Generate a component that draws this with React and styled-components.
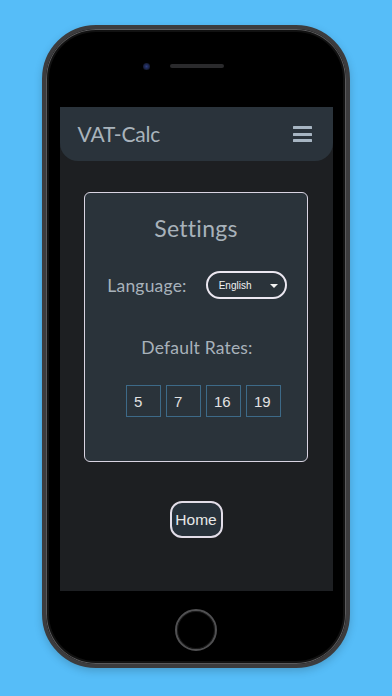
import React from "react";
import styled, { createGlobalStyle } from "styled-components";

const Global = createGlobalStyle`
  html, body { margin: 0; padding: 0; background: #56bdf8; }
  * { box-sizing: border-box; }
`;

const Page = styled.div`
  width: 392px;
  height: 696px;
  background: #56bdf8;
  display: flex;
  justify-content: center;
  padding-top: 25px;
  overflow: hidden;
`;

const Phone = styled.div`
  width: 308px;
  height: 643px;
  border-radius: 54px;
  background: #000;
  border: 4px solid #3c3c3e;
  box-shadow: inset 0 0 0 1px #5a5a5c, inset 0 0 0 3px #111, 0 3px 8px rgba(0,0,0,0.18);
  display: flex;
  flex-direction: column;
  align-items: center;
`;

const TopBezel = styled.div`
  height: 78px;
  width: 100%;
  display: flex;
  justify-content: center;
  align-items: center;
  gap: 20px;
  padding-right: 26px;
  padding-bottom: 4px;
`;

const Camera = styled.div`
  width: 7px;
  height: 7px;
  border-radius: 50%;
  background: radial-gradient(circle at 50% 50%, #2c3c80 0%, #141a30 70%);
`;

const Speaker = styled.div`
  width: 54px;
  height: 4px;
  border-radius: 2px;
  background: #2a2a2c;
`;

const Screen = styled.div`
  width: 273px;
  height: 484px;
  background: #1d1f22;
  display: flex;
  flex-direction: column;
  align-items: center;
`;

const Header = styled.div`
  width: 100%;
  height: 54px;
  background: #2a333b;
  border-radius: 0 0 18px 18px;
  display: flex;
  align-items: center;
  justify-content: space-between;
  padding: 0 21px 0 18px;
`;

const Title = styled.div`
  font-family: Lato, "Open Sans", sans-serif;
  font-size: 21px;
  color: #a9b3bc;
  letter-spacing: -0.2px;
  padding-bottom: 2px;
`;

const Burger = styled.div`
  width: 19px;
  display: flex;
  flex-direction: column;
  gap: 3.5px;
`;

const Bar = styled.div`
  height: 3px;
  background: #a7b5c2;
  border-radius: 0.5px;
`;

const Card = styled.div`
  margin-top: 31px;
  width: 224px;
  height: 270px;
  border: 1.5px solid #d9d4e2;
  border-radius: 6px;
  background: #2a333a;
  display: flex;
  flex-direction: column;
  align-items: center;
`;

const CardTitle = styled.div`
  font-family: Lato, "Open Sans", sans-serif;
  font-size: 23px;
  color: #a8b2ba;
  margin-top: 21px;
  letter-spacing: 0.3px;
`;

const Label = styled.div`
  font-family: Lato, "Open Sans", sans-serif;
  font-size: 17.5px;
  color: #a8b2ba;
  letter-spacing: 0.2px;
`;

const LangRow = styled.div`
  margin-top: 29px;
  display: flex;
  align-items: center;
  gap: 19px;
  padding-left: 2px;
`;

const Select = styled.div`
  width: 81px;
  height: 28px;
  border: 2px solid #ebe7f0;
  border-radius: 14px;
  display: flex;
  align-items: center;
  justify-content: space-between;
  padding: 0 7px 0 11px;
  font-family: "Liberation Sans", Arial, sans-serif;
  font-size: 10px;
  color: #f2f2f2;
`;

const Caret = styled.div`
  width: 0;
  height: 0;
  border-left: 4px solid transparent;
  border-right: 4px solid transparent;
  border-top: 4px solid #f2f2f2;
  margin-top: 1px;
`;

const RatesLabel = styled(Label)`
  margin-top: 38px;
  padding-left: 2px;
`;

const Rates = styled.div`
  margin-top: 27px;
  display: flex;
  gap: 5px;
  padding-left: 14px;
`;

const RateBox = styled.div`
  width: 35px;
  height: 32px;
  border: 1.5px solid #3d6a88;
  display: flex;
  align-items: center;
  padding-left: 7.5px;
  font-family: "Liberation Sans", Arial, sans-serif;
  font-size: 15px;
  color: #e2e2e2;
`;

const HomeButton = styled.div`
  margin-top: 39px;
  width: 53px;
  height: 37px;
  border: 2px solid #e2dde8;
  border-radius: 12px;
  background: #27313a;
  display: flex;
  align-items: center;
  justify-content: center;
  font-family: "Liberation Sans", Arial, sans-serif;
  font-size: 15.5px;
  color: #e8e8e8;
`;

const BottomBezel = styled.div`
  flex: 1;
  display: flex;
  justify-content: center;
  padding-top: 18px;
`;

const HomeKey = styled.div`
  width: 42px;
  height: 42px;
  border-radius: 50%;
  border: 2px solid #505052;
  box-shadow: inset 0 0 0 1px #1a1a1a;
`;

export default function App() {
  const rates = [5, 7, 16, 19];
  return (
    <>
      <Global />
      <Page>
        <Phone>
          <TopBezel>
            <Camera />
            <Speaker />
          </TopBezel>
          <Screen>
            <Header>
              <Title>VAT-Calc</Title>
              <Burger>
                <Bar />
                <Bar />
                <Bar />
              </Burger>
            </Header>
            <Card>
              <CardTitle>Settings</CardTitle>
              <LangRow>
                <Label>Language:</Label>
                <Select>
                  <span>English</span>
                  <Caret />
                </Select>
              </LangRow>
              <RatesLabel>Default Rates:</RatesLabel>
              <Rates>
                {rates.map((r) => (
                  <RateBox key={r}>{r}</RateBox>
                ))}
              </Rates>
            </Card>
            <HomeButton>Home</HomeButton>
          </Screen>
          <BottomBezel>
            <HomeKey />
          </BottomBezel>
        </Phone>
      </Page>
    </>
  );
}
